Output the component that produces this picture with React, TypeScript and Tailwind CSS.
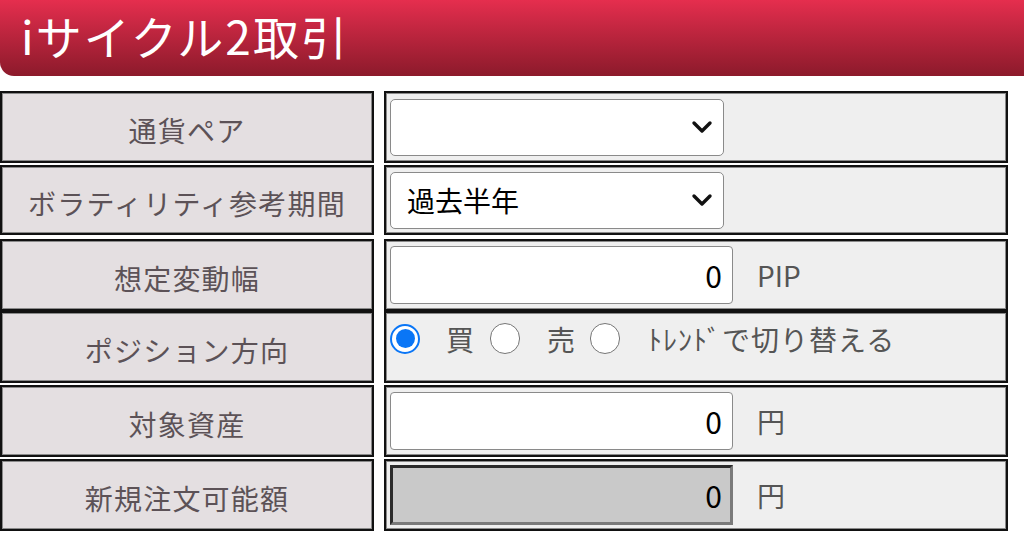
import React from 'react';

const jp = { fontFamily: '"Noto Sans CJK JP", "Noto Sans", sans-serif' };

const Chevron = () => (
    <svg width="22" height="14" viewBox="0 0 22 14" className="shrink-0">
        <path d="M3 3 L11 11 L19 3" fill="none" stroke="#111" strokeWidth="3.4" strokeLinecap="round" strokeLinejoin="round" />
    </svg>
);

const Radio = ({ checked }: { checked?: boolean }) =>
    checked ? (
        <span className="w-[30px] h-[30px] rounded-full border-[2.5px] border-[#0a76f6] bg-white flex items-center justify-center shrink-0">
            <span className="w-[19px] h-[19px] rounded-full bg-[#0a76f6]" />
        </span>
    ) : (
        <span className="block w-[30px] h-[31px] rounded-full border-[1.5px] border-[#767676] bg-white shrink-0" />
    );

const Label = ({ children }: { children: React.ReactNode }) => (
    <div className="w-[374px] shrink-0 border-2 border-[#111] shadow-[inset_0_0_0_1px_#8a8a8a] bg-[#e4dfe1] flex items-center justify-center pt-[6px] text-[28px] text-[#5c5257] tracking-[1.2px]">
        {children}
    </div>
);

const Cell = ({ children, top }: { children: React.ReactNode; top?: boolean }) => (
    <div className={`w-[624px] shrink-0 ml-[10px] border-2 border-[#111] shadow-[inset_0_0_0_1px_#8a8a8a] bg-[#efefef] flex px-[4px] ${top ? 'items-start pt-[12px]' : 'items-center'}`}>
        {children}
    </div>
);

const Select = ({ value }: { value?: string }) => (
    <div className="w-[334px] h-[57px] bg-white border border-[#8a8a8a] rounded-[5px] flex items-center justify-between pl-[16px] pr-[10px]">
        <span className="text-[28px] text-black">{value}</span>
        <Chevron />
    </div>
);

const NumInput = ({ disabled, unit }: { disabled?: boolean; unit: string }) => (
    <div className="flex items-center">
        {disabled ? (
            <div className="w-[343px] h-[60px] bg-[#c9c9c9] border-[3px] border-t-[#2b2b2b] border-l-[#2b2b2b] border-b-[#7a7a7a] border-r-[#7a7a7a] flex items-center justify-end pr-[8px] text-[30px] text-black">
                0
            </div>
        ) : (
            <div className="w-[343px] h-[58px] bg-white border border-[#8a8a8a] rounded-[4px] flex items-center justify-end pr-[10px] text-[30px] text-black">
                0
            </div>
        )}
        <span className="ml-[24px] text-[28px] text-[#555]">{unit}</span>
    </div>
);

export default function App() {
    return (
        <div className="w-[1024px] h-[539px] bg-white overflow-hidden" style={jp}>
            <div className="h-[76px] w-full rounded-bl-[14px] bg-gradient-to-b from-[#e52e4e] to-[#8c1a2b] flex items-center pl-[21px] pb-[6px]">
                <h1 className="text-[46px] text-white font-normal tracking-[2px] leading-none">iサイクル2取引</h1>
            </div>

            <div className="flex flex-col mt-[15px]">
                <div className="flex h-[72px]">
                    <Label>通貨ペア</Label>
                    <Cell><Select /></Cell>
                </div>
                <div className="flex h-[70px] mt-[2px]">
                    <Label>ボラティリティ参考期間</Label>
                    <Cell><Select value="過去半年" /></Cell>
                </div>
                <div className="flex h-[72px] mt-[4px]">
                    <Label>想定変動幅</Label>
                    <Cell><NumInput unit="PIP" /></Cell>
                </div>
                <div className="flex h-[72px]">
                    <Label>ポジション方向</Label>
                    <Cell top>
                        <div className="flex items-center text-[28px] leading-none text-[#555] mt-[-2px]">
                            <Radio checked />
                            <span className="ml-[26px]">買</span>
                            <span className="ml-[16px] flex"><Radio /></span>
                            <span className="ml-[27px]">売</span>
                            <span className="ml-[15px] flex"><Radio /></span>
                            <span className="ml-[28px] tracking-[1px]">ﾄﾚﾝﾄﾞで切り替える</span>
                        </div>
                    </Cell>
                </div>
                <div className="flex h-[72px] mt-[2px]">
                    <Label>対象資産</Label>
                    <Cell><NumInput unit="円" /></Cell>
                </div>
                <div className="flex h-[72px] mt-[2px]">
                    <Label>新規注文可能額</Label>
                    <Cell><NumInput unit="円" disabled /></Cell>
                </div>
            </div>
        </div>
    );
}
